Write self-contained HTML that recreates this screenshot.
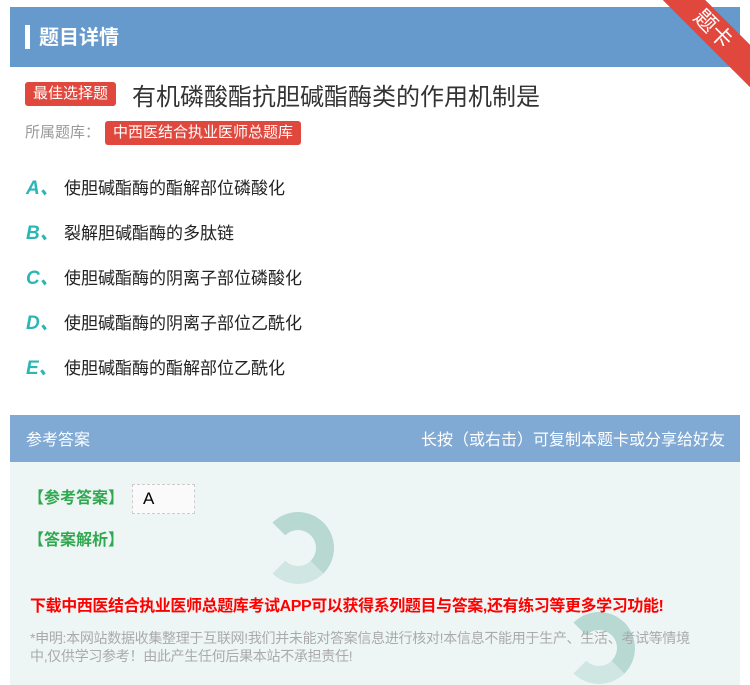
<!DOCTYPE html>
<html><head><meta charset="utf-8"><style>
*{margin:0;padding:0;box-sizing:border-box}
body{width:750px;height:685px;background:#fff;font-family:"Liberation Sans","Noto Sans CJK SC",sans-serif;position:relative;overflow:hidden}
.hd{position:absolute;left:10px;top:7px;width:730px;height:60px;background:#6699cc}
.hd .bar{position:absolute;left:15px;top:18px;width:5px;height:24px;background:#fff}
.hd .t{position:absolute;left:29px;top:14px;color:#fff;font-size:20px;font-weight:bold}
.rib{position:absolute;right:-38px;top:14px;width:150px;height:30px;background:#e0483e;transform:rotate(45deg);color:#fff;font-size:22px;text-align:center;line-height:30px;transform-origin:center}
.tag{position:absolute;background:#e0483e;color:#fff;border-radius:3px;font-size:15px;padding:0 8px;height:24px;line-height:24px}
.q{position:absolute;left:132px;top:77px;font-size:24px;color:#333}
.lib{position:absolute;left:25px;top:121px;font-size:15px;color:#999}
.opt{position:absolute;left:26px;font-size:17px;color:#222}
.opt b{color:#2bb5b5;font-style:italic;font-size:19px;display:inline-block;width:38px}
.ah{position:absolute;left:10px;top:415px;width:730px;height:47px;background:#80aad4;color:#fff;font-size:16px}
.ab{position:absolute;left:10px;top:462px;width:730px;height:223px;background:#eef6f5}
.g{position:absolute;color:#2fa84f;font-size:16px;font-weight:bold}
.circ{position:absolute;border-radius:50%;border:18px solid #b8d8d2;border-left-color:transparent;border-bottom-color:#cfe6e2}
</style></head><body>
<div class="hd"><div class="bar"></div><div class="t">题目详情</div></div>
<div class="rib">题卡</div>
<div class="tag" style="left:25px;top:82px">最佳选择题</div>
<div class="q">有机磷酸酯抗胆碱酯酶类的作用机制是</div>
<div class="lib">所属题库：</div>
<div class="tag" style="left:105px;top:121px">中西医结合执业医师总题库</div>
<div class="opt" style="top:173px"><b>A、</b>使胆碱酯酶的酯解部位磷酸化</div>
<div class="opt" style="top:218px"><b>B、</b>裂解胆碱酯酶的多肽链</div>
<div class="opt" style="top:263px"><b>C、</b>使胆碱酯酶的阴离子部位磷酸化</div>
<div class="opt" style="top:308px"><b>D、</b>使胆碱酯酶的阴离子部位乙酰化</div>
<div class="opt" style="top:353px"><b>E、</b>使胆碱酯酶的酯解部位乙酰化</div>
<div class="ah"><span style="position:absolute;left:16px;top:11px">参考答案</span><span style="position:absolute;right:15px;top:11px">长按（或右击）可复制本题卡或分享给好友</span></div>
<div class="ab">
<div class="circ" style="left:252px;top:50px;width:72px;height:72px"></div>
<div class="circ" style="left:553px;top:150px;width:72px;height:72px"></div>
</div>
<div class="g" style="left:28px;top:484px">【参考答案】</div>
<div style="position:absolute;left:132px;top:484px;width:63px;height:30px;background:#fafafa;border:1px dashed #ccc;font-size:17px;padding-left:10px;line-height:28px">A</div>
<div class="g" style="left:28px;top:526px">【答案解析】</div>
<div style="position:absolute;left:30px;top:592px;color:#f00;font-size:16px;font-weight:bold;letter-spacing:-0.4px">下载中西医结合执业医师总题库考试APP可以获得系列题目与答案,还有练习等更多学习功能!</div>
<div style="position:absolute;left:30px;top:629px;width:672px;color:#aaa;font-size:14px;line-height:18px;letter-spacing:-0.3px">*申明:本网站数据收集整理于互联网!我们并未能对答案信息进行核对!本信息不能用于生产、生活、考试等情境中,仅供学习参考！由此产生任何后果本站不承担责任!</div>
</body></html>
